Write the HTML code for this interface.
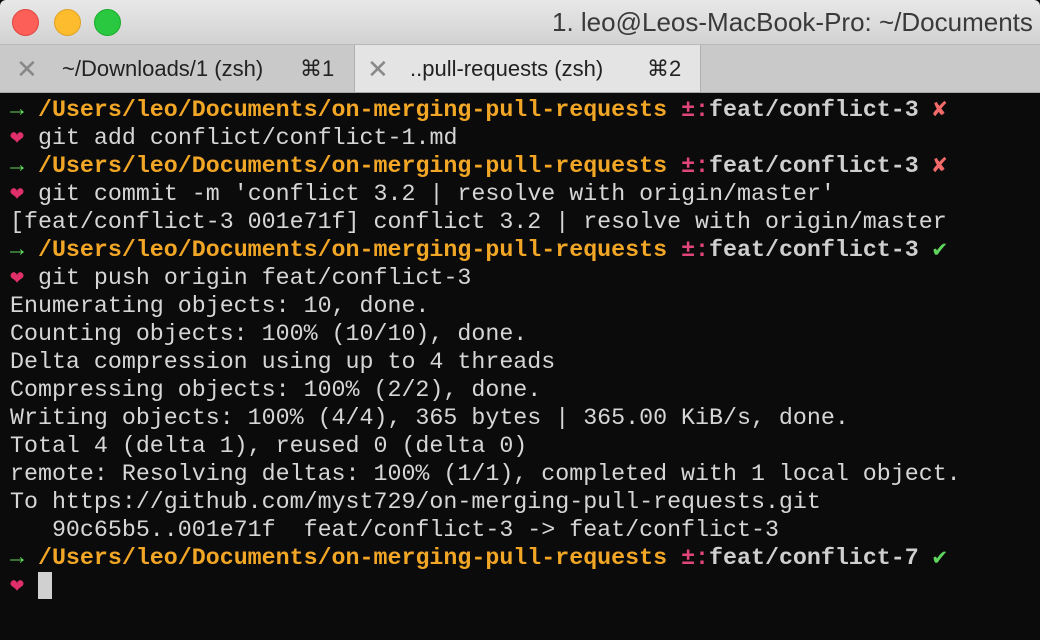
<!DOCTYPE html>
<html><head><meta charset="utf-8"><style>
html,body{margin:0;padding:0;width:1040px;height:640px;overflow:hidden;background:#0b0b0b}
.title{position:absolute;left:0;top:0;width:1040px;height:44px;background:linear-gradient(#e8e8e8,#d2d2d2);border-radius:6px 6px 0 0}
.dot{position:absolute;top:9px;width:26px;height:26px;border-radius:50%}
.ttext{position:absolute;left:552px;top:7px;font:26px "Liberation Sans",sans-serif;color:#3a3a3a;white-space:nowrap}
.tabs{position:absolute;left:0;top:44px;width:1040px;height:47px;background:#c9c9c9;border-top:1px solid #b8b8b8;border-bottom:1px solid #a8a8a8}
.tab{position:absolute;top:0;height:47px;font:22px "Liberation Sans",sans-serif;color:#222;white-space:nowrap}
.x{position:absolute;top:9px;font:26px "Liberation Sans",sans-serif;color:#888}
.term{position:absolute;left:10px;top:96px;font:23.3px/28px "Liberation Mono",monospace;color:#d6d6d6;white-space:pre}
.g{color:#5fd75f;font-weight:bold}.o{color:#f2a626;font-weight:bold}.p{color:#e0457b;font-weight:bold}.b{color:#cfcfcf;font-weight:bold}.r{color:#f26a6a;font-weight:bold}.h{color:#e0306a}
.cur{display:inline-block;width:14px;height:27px;background:#d0d0d0;vertical-align:top}
</style></head><body>
<div class="title">
<div class="dot" style="left:12px;background:#fc5f57;border:1px solid #e0443e;width:25px;height:25px"></div>
<div class="dot" style="left:54px;background:#fdbc2e;border:1px solid #dea123;width:25px;height:25px"></div>
<div class="dot" style="left:94px;background:#29c840;border:1px solid #1aab29;width:25px;height:25px"></div>
<div class="ttext">1. leo@Leos-MacBook-Pro: ~/Documents</div>
</div>
<div class="tabs">
<div class="tab" style="left:0;width:354px;border-right:1px solid #b0b0b0"><span class="x" style="left:16px">✕</span><span style="position:absolute;left:62px;top:11px">~/Downloads/1 (zsh)</span><span style="position:absolute;left:300px;top:11px">⌘1</span></div>
<div class="tab" style="left:355px;width:345px;background:#e4e4e4;border-right:1px solid #b0b0b0"><span class="x" style="left:12px">✕</span><span style="position:absolute;left:55px;top:11px">..pull-requests (zsh)</span><span style="position:absolute;left:292px;top:11px">⌘2</span></div>
</div>
<div class="term"><span class="g">→</span> <span class="o">/Users/leo/Documents/on-merging-pull-requests</span> <span class="p">±:</span><span class="b">feat/conflict-3</span> <span class="r">✘</span>
<span class="h">❤</span> git add conflict/conflict-1.md
<span class="g">→</span> <span class="o">/Users/leo/Documents/on-merging-pull-requests</span> <span class="p">±:</span><span class="b">feat/conflict-3</span> <span class="r">✘</span>
<span class="h">❤</span> git commit -m 'conflict 3.2 | resolve with origin/master'
[feat/conflict-3 001e71f] conflict 3.2 | resolve with origin/master
<span class="g">→</span> <span class="o">/Users/leo/Documents/on-merging-pull-requests</span> <span class="p">±:</span><span class="b">feat/conflict-3</span> <span class="g">✔</span>
<span class="h">❤</span> git push origin feat/conflict-3
Enumerating objects: 10, done.
Counting objects: 100% (10/10), done.
Delta compression using up to 4 threads
Compressing objects: 100% (2/2), done.
Writing objects: 100% (4/4), 365 bytes | 365.00 KiB/s, done.
Total 4 (delta 1), reused 0 (delta 0)
remote: Resolving deltas: 100% (1/1), completed with 1 local object.
To https://github.com/myst729/on-merging-pull-requests.git
   90c65b5..001e71f  feat/conflict-3 -> feat/conflict-3
<span class="g">→</span> <span class="o">/Users/leo/Documents/on-merging-pull-requests</span> <span class="p">±:</span><span class="b">feat/conflict-7</span> <span class="g">✔</span>
<span class="h">❤</span> <span class="cur"></span></div>
</body></html>
